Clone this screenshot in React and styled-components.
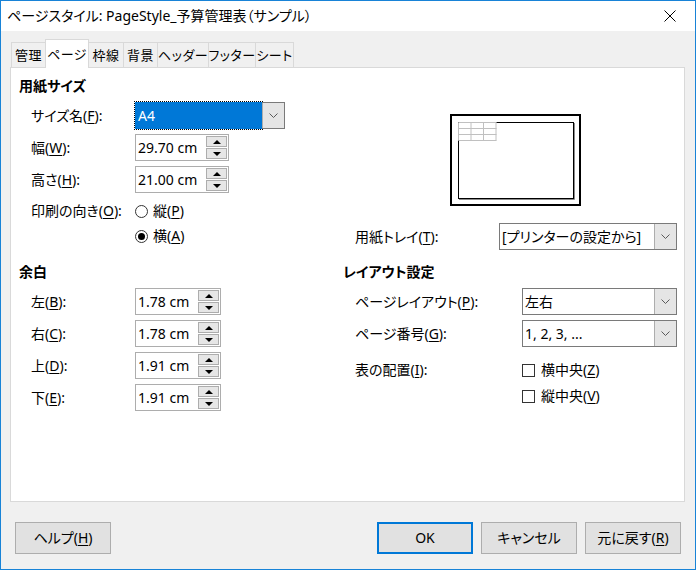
import React from 'react';
import styled, { createGlobalStyle, css } from 'styled-components';

const GlobalStyle = createGlobalStyle`
  html, body {
    margin: 0;
    padding: 0;
    background: #fff;
  }
  body {
    font-family: "Noto Sans", "Noto Sans CJK JP", sans-serif;
    font-size: 14px;
    line-height: 18px;
    color: #000;
    font-feature-settings: "palt";
  }
`;

const Window = styled.div`
  width: 696px;
  height: 570px;
  box-sizing: border-box;
  border: 1px solid #1883d7;
  background: #f0f0f0;
  display: flex;
  flex-direction: column;
`;

const TitleBar = styled.div`
  height: 30px;
  flex: none;
  background: #fff;
  display: flex;
  align-items: center;
  justify-content: space-between;
  padding-left: 6px;
`;

const TitleText = styled.span`
  font-size: 14px;
  white-space: nowrap;
`;

const CloseButton = styled.div`
  width: 46px;
  height: 30px;
  margin-right: 2px;
  display: flex;
  align-items: center;
  justify-content: center;
`;

const TabStrip = styled.div`
  height: 36px;
  flex: none;
  display: flex;
  align-items: flex-end;
  padding-left: 10px;
`;

const Tab = styled.div`
  box-sizing: border-box;
  width: ${(p) => p.$w}px;
  height: 25px;
  margin-left: -1px;
  border: 1px solid #d9d9d9;
  border-bottom: none;
  background: #f0f0f0;
  display: flex;
  align-items: center;
  justify-content: center;
  white-space: nowrap;
  font-size: 13px;
  letter-spacing: 0.5px;

  &:first-child {
    margin-left: 0;
  }

  ${(p) =>
    p.$active &&
    css`
      height: 29px;
      margin-bottom: -1px;
      background: #fff;
      position: relative;
      z-index: 1;
      padding-bottom: 1px;
    `}
`;

const Panel = styled.div`
  height: 435px;
  flex: none;
  box-sizing: border-box;
  margin: 0 10px 0 9px;
  border: 1px solid #d9d9d9;
  background: #fff;
  padding-top: 9px;
  display: grid;
  grid-template-columns: 332px 1fr;
  grid-template-rows: auto auto;
  row-gap: 13px;
  align-content: start;
`;

const Section = styled.div`
  display: flex;
  flex-direction: column;
  padding-left: ${(p) => p.$indent || 0}px;
`;

const Heading = styled.div`
  font-weight: bold;
  height: 18px;
  line-height: 18px;
`;

const FieldGrid = styled.div`
  display: grid;
  grid-template-columns: ${(p) => p.$cols};
  row-gap: 5px;
  margin-top: 7px;
  padding-left: 12px;
  align-items: center;
  justify-items: start;
`;

const Label = styled.div`
  white-space: nowrap;
  align-self: ${(p) => (p.$top ? 'start' : 'center')};
  line-height: 20px;
  margin-top: ${(p) => p.$mt || 0}px;
`;

const Key = styled.span`
  text-decoration: underline;
  text-underline-offset: 2px;
  text-decoration-thickness: 1px;
`;

const Box = styled.div`
  box-sizing: border-box;
  width: ${(p) => p.$w}px;
  height: 27px;
  border: 1px solid ${(p) => (p.$dark ? '#7a7a7a' : '#adadad')};
  background: #fff;
  display: flex;
  align-items: stretch;
`;

const Value = styled.div`
  flex: 1;
  display: flex;
  align-items: center;
  padding-left: 2px;
  white-space: nowrap;
  overflow: hidden;

  ${(p) =>
    p.$selected &&
    css`
      background: #0078d7;
      color: #fff;
      outline: 1px dotted #000;
      outline-offset: 0;
      margin: -1px 0 -1px -1px;
      padding-left: 3px;
    `}
`;

const DropButton = styled.div`
  width: 21px;
  flex: none;
  background: #e5e5e5;
  border-left: 1px solid #adadad;
  display: flex;
  align-items: center;
  justify-content: center;
`;

const Spinner = styled.div`
  width: 21px;
  flex: none;
  display: flex;
  flex-direction: column;
  padding: 1px 1px 1px 0;
  gap: 1px;
`;

const SpinButton = styled.div`
  flex: 1;
  box-sizing: border-box;
  border: 1px solid #adadad;
  background: #e6e6e6;
  display: flex;
  align-items: center;
  justify-content: center;
`;

const Arrow = styled.span`
  width: 0;
  height: 0;
  border-left: 4px solid transparent;
  border-right: 4px solid transparent;
  ${(p) =>
    p.$down
      ? css`
          border-top: 4px solid #000;
        `
      : css`
          border-bottom: 4px solid #000;
        `}
`;

const ChoiceGroup = styled.div`
  display: flex;
  flex-direction: column;
  gap: ${(p) => p.$gap}px;
  margin-top: ${(p) => p.$mt || 0}px;
`;

const Choice = styled.label`
  display: flex;
  align-items: center;
  height: 20px;
  white-space: nowrap;
`;

const RadioMark = styled.span`
  box-sizing: border-box;
  width: 13px;
  height: 13px;
  border-radius: 50%;
  border: 1px solid #333;
  background: #fff;
  margin-right: 5px;
  display: flex;
  align-items: center;
  justify-content: center;

  &::after {
    content: '';
    width: 7px;
    height: 7px;
    border-radius: 50%;
    background: ${(p) => (p.$checked ? '#000' : 'transparent')};
  }
`;

const CheckMark = styled.span`
  box-sizing: border-box;
  width: 13px;
  height: 13px;
  border: 1px solid #333;
  background: #fff;
  margin-right: 6px;
`;

const PreviewWrap = styled.div`
  margin-top: 37px;
  margin-left: 107px;
  width: 131px;
  height: 92px;
`;

const TrayGrid = styled(FieldGrid)`
  margin-top: 17px;
`;

const Footer = styled.div`
  flex: none;
  display: flex;
  gap: 8px;
  padding: 20px 14px 0 14px;
`;

const Button = styled.div`
  box-sizing: border-box;
  width: 96px;
  height: 32px;
  background: #e1e1e1;
  border: 1px solid #adadad;
  display: flex;
  align-items: center;
  justify-content: center;
  white-space: nowrap;
  font-size: 14px;

  ${(p) =>
    p.$primary &&
    css`
      border: 2px solid #0078d7;
      margin-left: auto;
    `}
`;

const Chevron = () => (
  <svg width="9" height="5" viewBox="0 0 9 5">
    <path d="M0.5 0.5 L4.5 4.5 L8.5 0.5" fill="none" stroke="#5a5a5a" strokeWidth="1" />
  </svg>
);

const Select = ({ w, value, selected }) => (
  <Box $w={w} $dark>
    <Value $selected={selected}>{value}</Value>
    <DropButton>
      <Chevron />
    </DropButton>
  </Box>
);

const Spin = ({ w, value }) => (
  <Box $w={w}>
    <Value>{value}</Value>
    <Spinner>
      <SpinButton>
        <Arrow />
      </SpinButton>
      <SpinButton>
        <Arrow $down />
      </SpinButton>
    </Spinner>
  </Box>
);

const PagePreview = () => (
  <svg width="131" height="92" viewBox="0 0 131 92">
    <rect x="1" y="1" width="129" height="90" fill="#fff" stroke="#000" strokeWidth="2" />
    <path d="M124.5 9 V85.5 H9" fill="none" stroke="#8c8c8c" strokeWidth="1" />
    <rect x="8.5" y="8.5" width="115" height="76" fill="#fff" stroke="#000" strokeWidth="1" />
    <g stroke="#c0c0c0" strokeWidth="1" fill="none">
      <path d="M8.5 14.5 H46.5 M8.5 20.5 H46.5 M8.5 26.5 H46.5" />
      <path d="M21 8.5 V26.5 M33.5 8.5 V26.5 M46 8.5 V26.5" />
      <path d="M8.5 8.5 H46.5 M8.5 8.5 V26.5" />
    </g>
  </svg>
);

const tabs = [
  ['管理', 35],
  ['ページ', 44],
  ['枠線', 36],
  ['背景', 35],
  ['ヘッダー', 52],
  ['フッター', 48],
  ['シート', 39],
];

const margins = [
  ['左', 'B', '1.78 cm'],
  ['右', 'C', '1.78 cm'],
  ['上', 'D', '1.91 cm'],
  ['下', 'E', '1.91 cm'],
];

const App = () => (
  <>
    <GlobalStyle />
    <Window>
      <TitleBar>
        <TitleText>ページスタイル: PageStyle_予算管理表（サンプル）</TitleText>
        <CloseButton>
          <svg width="12" height="12" viewBox="0 0 12 12">
            <path d="M0.5 0.5 L11.5 11.5 M11.5 0.5 L0.5 11.5" stroke="#000" strokeWidth="1" />
          </svg>
        </CloseButton>
      </TitleBar>

      <TabStrip>
        {tabs.map(([name, w]) => (
          <Tab key={name} $w={w} $active={name === 'ページ'}>
            {name}
          </Tab>
        ))}
      </TabStrip>

      <Panel>
        <Section $indent={8}>
          <Heading>用紙サイズ</Heading>
          <FieldGrid $cols="104px auto">
            <Label>
              サイズ名(<Key>F</Key>):
            </Label>
            <Select w={150} value="A4" selected />
            <Label>
              幅(<Key>W</Key>):
            </Label>
            <Spin w={94} value="29.70 cm" />
            <Label>
              高さ(<Key>H</Key>):
            </Label>
            <Spin w={94} value="21.00 cm" />
            <Label $top $mt={3}>
              印刷の向き(<Key>O</Key>):
            </Label>
            <ChoiceGroup $gap={5} $mt={3}>
              <Choice>
                <RadioMark />
                縦(<Key>P</Key>)
              </Choice>
              <Choice>
                <RadioMark $checked />
                横(<Key>A</Key>)
              </Choice>
            </ChoiceGroup>
          </FieldGrid>
        </Section>

        <Section>
          <PreviewWrap>
            <PagePreview />
          </PreviewWrap>
          <TrayGrid $cols="144px auto">
            <Label>
              用紙トレイ(<Key>T</Key>):
            </Label>
            <Select w={178} value="[プリンターの設定から]" />
          </TrayGrid>
        </Section>

        <Section $indent={8}>
          <Heading>余白</Heading>
          <FieldGrid $cols="104px auto">
            {margins.map(([name, key, value]) => (
              <React.Fragment key={key}>
                <Label>
                  {name}(<Key>{key}</Key>):
                </Label>
                <Spin w={86} value={value} />
              </React.Fragment>
            ))}
          </FieldGrid>
        </Section>

        <Section>
          <Heading>レイアウト設定</Heading>
          <FieldGrid $cols="167px auto">
            <Label>
              ページレイアウト(<Key>P</Key>):
            </Label>
            <Select w={155} value="左右" />
            <Label>
              ページ番号(<Key>G</Key>):
            </Label>
            <Select w={155} value="1, 2, 3, ..." />
            <Label $top $mt={8}>
              表の配置(<Key>I</Key>):
            </Label>
            <ChoiceGroup $gap={6} $mt={8}>
              <Choice>
                <CheckMark />
                横中央(<Key>Z</Key>)
              </Choice>
              <Choice>
                <CheckMark />
                縦中央(<Key>V</Key>)
              </Choice>
            </ChoiceGroup>
          </FieldGrid>
        </Section>
      </Panel>

      <Footer>
        <Button>
          ヘルプ(<Key>H</Key>)
        </Button>
        <Button $primary>OK</Button>
        <Button>キャンセル</Button>
        <Button>
          元に戻す(<Key>R</Key>)
        </Button>
      </Footer>
    </Window>
  </>
);

export default App;
